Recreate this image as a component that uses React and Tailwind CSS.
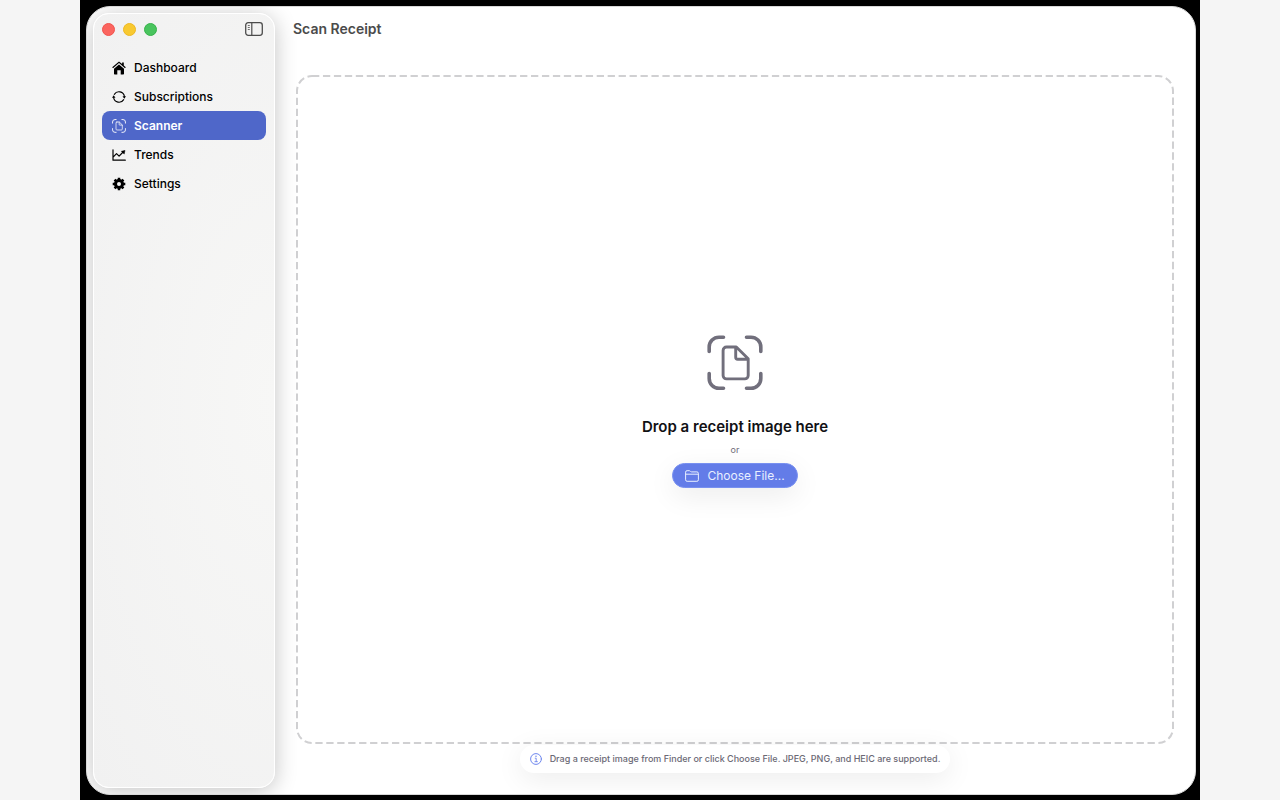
import React from "react";

function HouseIcon({ className }) {
  return (
    <svg viewBox="0 0 14 14" className={className} fill="currentColor" aria-hidden="true">
      <path d="M7 .5.2 6.300l.8.9L7 2.100l6 5.100.8-.9-2-1.700V1.500h-1.700v1.600z" />
      <path d="M7 3.500 2 7.800v4.600c0 .6.4 1 1 1h2.300V9.200h3.400v4.200H11c.6 0 1-.4 1-1V7.800z" />
    </svg>
  );
}

function CycleIcon({ className }) {
  return (
    <svg viewBox="0 0 14 14" className={className} aria-hidden="true">
      <g fill="none" stroke="currentColor" strokeWidth="1.100" strokeLinecap="round">
        <path d="M2.300 4.400a5.500 5.500 0 0 1 10.100 2" />
        <path d="M11.700 9.600a5.500 5.500 0 0 1-10.100-2" />
      </g>
      <path d="M10.500 6.300h3.500l-1.700 2.400zM0 7.700h3.500L1.700 5.300z" fill="currentColor" />
    </svg>
  );
}

function ScanDocumentIcon({ className }) {
  return (
    <svg viewBox="0 0 56 56" className={className} fill="none" stroke="currentColor" strokeLinecap="round" strokeLinejoin="round" aria-hidden="true">
      <path strokeWidth="3.600" d="M2.2 16.5V12A9.8 9.8 0 0 1 12 2.2h4.5M39.500 2.200H44A9.800 9.800 0 0 1 53.800 12v4.500M53.800 38.500V43.500A9.800 9.800 0 0 1 44 53.300h-4.500M16.500 53.300H12A9.800 9.800 0 0 1 2.200 43.500v-5" />
      <path strokeWidth="2.900" d="M19.500 12h9.800L41.200 23.700V40.500a3.400 3.400 0 0 1-3.400 3.400H19.500a3.400 3.400 0 0 1-3.400-3.400V15.400A3.400 3.400 0 0 1 19.500 12zM28.700 12.500v9.800a2 2 0 0 0 2 2h10" />
    </svg>
  );
}

function TrendIcon({ className }) {
  return (
    <svg viewBox="0 0 14 14" className={className} aria-hidden="true">
      <path d="M1 1.800v10.400h12.300M1.600 8.600 4.500 5.600l2.600 2.600 4-4.200" fill="none" stroke="currentColor" strokeWidth="1.200" strokeLinecap="round" strokeLinejoin="round" />
      <path d="M9.300 3.300 13 2.400l-.8 3.700z" fill="currentColor" stroke="currentColor" strokeWidth=".5" strokeLinejoin="round" />
    </svg>
  );
}

function GearIcon({ className }) {
  return (
    <svg viewBox="0 0 14 14" className={className} fill="none" stroke="currentColor" aria-hidden="true">
      <circle cx="7" cy="7" r="3.500" strokeWidth="3" />
      <path strokeWidth="2.500" d="M7 .7v2.500M7 10.800v2.500M.7 7h2.500M10.800 7h2.500M2.550 2.550l1.700 1.700M9.750 9.750l1.700 1.700M2.550 11.450l1.700-1.700M9.750 4.250l1.700-1.700" />
    </svg>
  );
}

function SidebarIcon({ className }) {
  return (
    <svg viewBox="0 0 18 14" className={className} fill="none" stroke="currentColor" strokeLinecap="round" aria-hidden="true">
      <rect x=".7" y=".7" width="16.600" height="12.600" rx="2.500" strokeWidth="1.300" />
      <path strokeWidth="1.200" d="M6.800 1v12" />
      <path strokeWidth=".8" d="M3.200 3.500h1.200M3.200 5.500h1.200M3.200 7.500h1.200" />
    </svg>
  );
}

function FolderIcon({ className }) {
  return (
    <svg viewBox="0 0 14 12" className={className} fill="none" stroke="currentColor" strokeLinejoin="round" aria-hidden="true">
      <path d="M.6 9.800V2.200A1.500 1.500 0 0 1 2.100.7h2.100c.5 0 .8.2 1.100.5l.4.400c.3.200.5.300.9.300h5.300a1.500 1.500 0 0 1 1.500 1.500v6.400a1.500 1.500 0 0 1-1.500 1.500H2.100A1.500 1.500 0 0 1 .6 9.800zM.6 4.200h12.800" />
    </svg>
  );
}

function InfoIcon({ className }) {
  return (
    <svg viewBox="0 0 12 12" className={className} fill="none" stroke="currentColor" strokeLinecap="round" aria-hidden="true">
      <circle cx="6" cy="6" r="5.400" />
      <path d="M5.200 5.200H6.200v3.400M4.900 8.700h2.500" strokeWidth=".9" />
      <circle cx="6" cy="3.300" r=".75" fill="currentColor" stroke="none" />
    </svg>
  );
}

const navItems = [
  { label: "Dashboard", Icon: HouseIcon },
  { label: "Subscriptions", Icon: CycleIcon },
  { label: "Scanner", Icon: ScanDocumentIcon, active: true },
  { label: "Trends", Icon: TrendIcon },
  { label: "Settings", Icon: GearIcon },
];

function Sidebar() {
  return (
    <aside className="z-10 flex w-[182px] shrink-0 flex-col rounded-2xl border border-white bg-[radial-gradient(ellipse_at_right,#f7f7f6,#f1f1f1)] px-2 shadow-[0_3px_22px_rgba(0,0,0,0.24)]">
      <div className="flex h-[30px] items-center gap-2 pr-[3px]">
        <button type="button" aria-label="Close" className="size-[13px] rounded-full border border-[#f0524c] bg-[#fb655f]" />
        <button type="button" aria-label="Minimize" className="size-[13px] rounded-full border border-[#edb722] bg-[#f8c930]" />
        <button type="button" aria-label="Zoom" className="size-[13px] rounded-full border border-[#36b24a] bg-[#49c45e]" />
        <button type="button" aria-label="Toggle sidebar" className="ml-auto text-[#4c4c4c]">
          <SidebarIcon className="h-3.5 w-[18px]" />
        </button>
      </div>
      <nav className="flex flex-col pt-[9px]">
        {navItems.map(({ label, Icon, active }) => (
          <a
            key={label}
            href="#"
            aria-current={active ? "page" : undefined}
            className={
              active
                ? "flex h-[29px] items-center gap-2 rounded-lg bg-[#4f67c9] px-2.5 font-semibold text-white"
                : "flex h-[29px] items-center gap-2 rounded-lg px-2.5 font-medium text-black"
            }
          >
            <Icon className="size-3.5" />
            <span>{label}</span>
          </a>
        ))}
      </nav>
    </aside>
  );
}

function DropZone() {
  return (
    <section className="relative flex flex-1 flex-col items-center justify-center pt-1">
      <svg className="pointer-events-none absolute inset-0 size-full overflow-visible" aria-hidden="true">
        <rect x="1" y="1" rx="15" className="h-[calc(100%-2px)] w-[calc(100%-2px)] fill-none stroke-[#d0d0d2] stroke-2" strokeDasharray="7.300 3.650" />
      </svg>
      <ScanDocumentIcon className="size-14 text-[#716f7c]" />
      <h2 className="mt-6 text-[15px] leading-6 font-semibold text-[#111114]">Drop a receipt image here</h2>
      <p className="mt-[3px] text-[9px] leading-4 text-[#6f6d79]">or</p>
      <button type="button" className="mt-[5px] flex h-[25px] items-center gap-2 rounded-full border border-[#7890f0] bg-[#637ce8] px-3 text-xs text-[#e8efff] shadow-[0_8px_28px_rgba(0,0,0,0.08)]">
        <FolderIcon className="h-3 w-3.5" />
        Choose File...
      </button>
    </section>
  );
}

export default function App() {
  return (
    <div className="min-h-screen bg-[#f5f5f5] font-['Inter','Liberation_Sans',sans-serif] text-xs">
      <div className="mx-auto flex min-h-screen max-w-[1120px] bg-black pt-[6px] pr-1 pb-[5px] pl-[6px]">
        <div className="flex flex-1 overflow-hidden rounded-3xl border border-[#d8d8d8] bg-white p-[6px]">
          <Sidebar />
          <main className="flex flex-1 flex-col pr-[15px] pb-[15px] pl-[21px]">
            <header className="flex h-8 items-center">
              <h1 className="-ml-[3px] text-sm font-semibold text-[#4b4b4b]">Scan Receipt</h1>
            </header>
            <div className="flex flex-1 flex-col pt-[30px]">
              <DropZone />
              <p className="z-10 mt-px flex h-7 items-center gap-2 self-center rounded-full bg-white px-2.5 text-[9px] font-medium text-[#6b6975] shadow-[0_6px_28px_rgba(0,0,0,0.08)]">
                <InfoIcon className="size-3 text-[#6f87ee]" />
                Drag a receipt image from Finder or click Choose File. JPEG, PNG, and HEIC are supported.
              </p>
            </div>
          </main>
        </div>
      </div>
    </div>
  );
}
